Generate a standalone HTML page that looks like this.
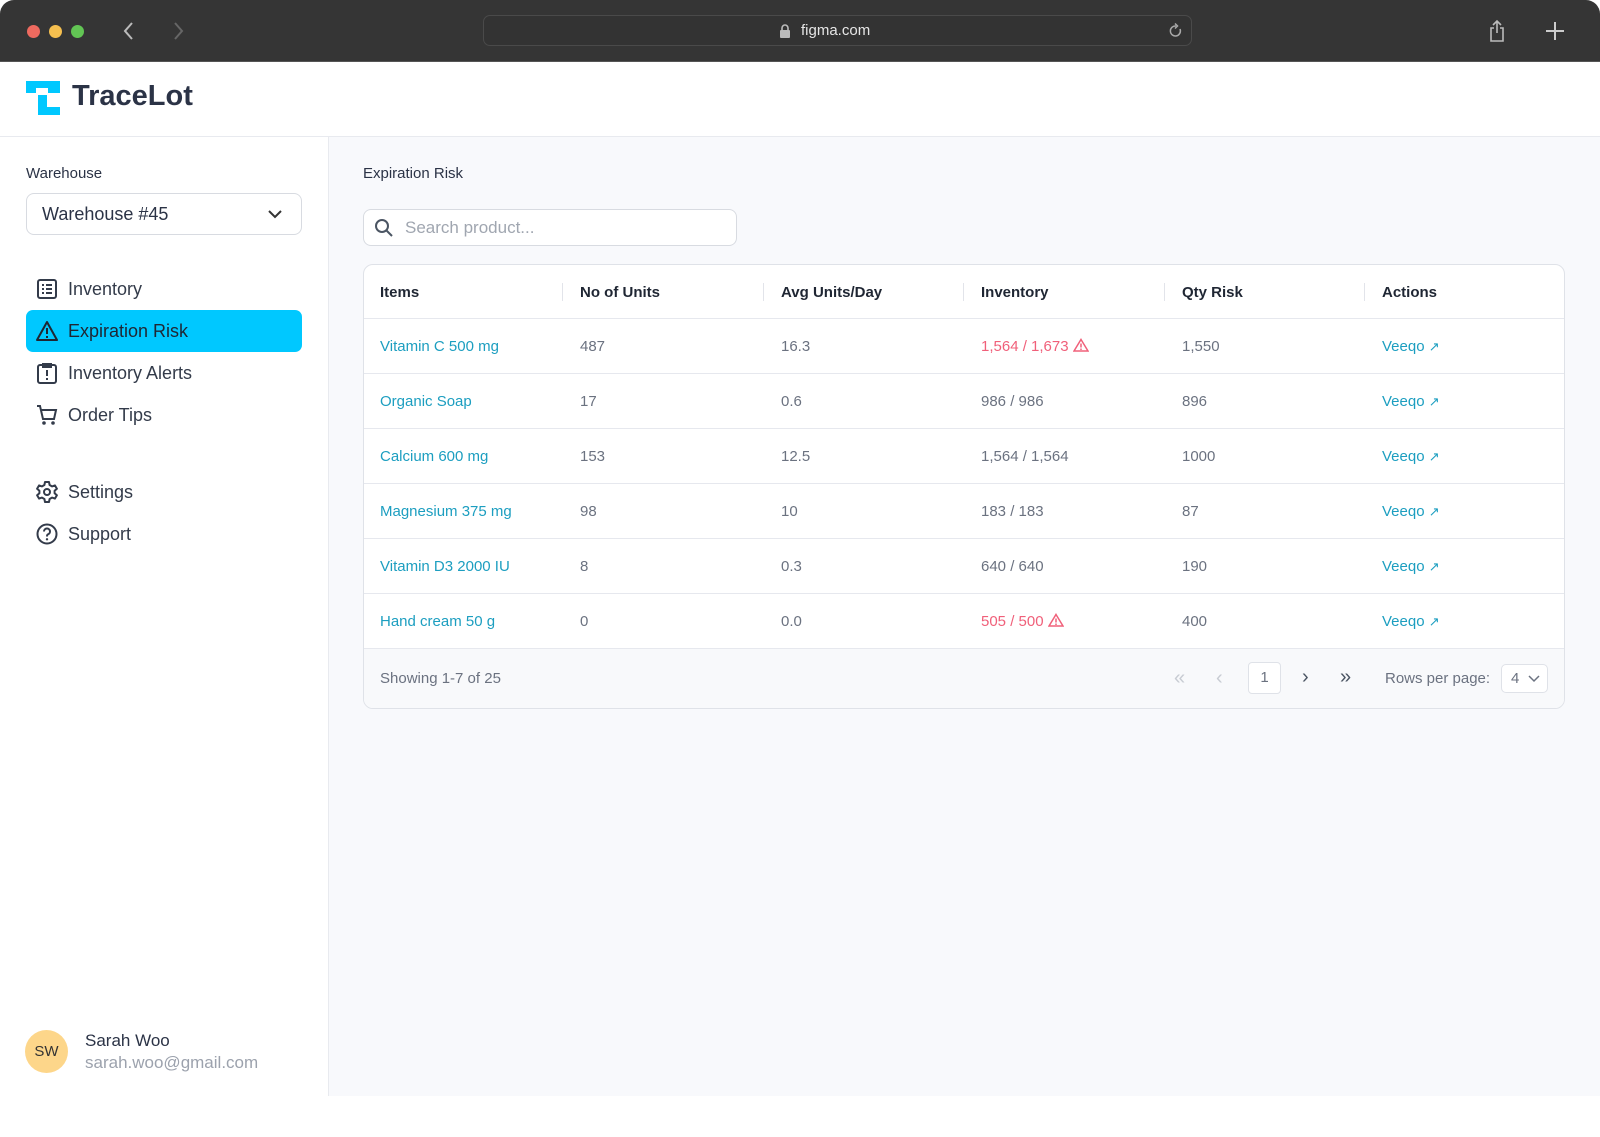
<!DOCTYPE html>
<html><head><meta charset="utf-8"><style>
*{box-sizing:border-box;margin:0;padding:0}
body{width:1600px;height:1137px;background:#fff;font-family:"Liberation Sans",sans-serif;position:relative;overflow:hidden}
.abs{position:absolute}
.top{left:0;top:0;width:1600px;height:62px;background:#353535;border-radius:14px 14px 0 0;border-bottom:1px solid #555}
.dot{width:13px;height:13px;border-radius:50%;top:25px}
.url{left:483px;top:15px;width:709px;height:31px;border:1px solid #4a4a4a;border-radius:7px;background:#333}
.hdr{left:0;top:62px;width:1600px;height:75px;background:#fff;border-bottom:1px solid #e8eaef}
.side{left:0;top:137px;width:329px;height:959px;background:#fff;border-right:1px solid #e8eaef}
.main{left:329px;top:137px;width:1271px;height:959px;background:#f8f9fc}
.nav{left:26px;width:276px;height:42px;border-radius:7px;font-size:18px;color:#333b4a}
.nav svg{position:absolute;left:10px;top:10px}
.nav span{position:absolute;left:42px;top:11px}
.tbl{left:363px;top:264px;width:1202px;height:445px;background:#fff;border:1.5px solid #dfe2e8;border-radius:10px;overflow:hidden}
.row{position:absolute;left:0;width:100%;height:55px;border-top:1.5px solid #e6e8ee;font-size:15px;color:#6b7280}
.row div{position:absolute;top:19px}
.th{font-size:15px;color:#1f2633;font-weight:bold}
.link{color:#1c9ec0}
.red{color:#f0607a}
.sep{position:absolute;top:18px;width:1px;height:18px;background:#e2e4ea}
</style></head><body>
<div class="abs top">
<div class="abs dot" style="left:27px;background:#ee6a5f"></div>
<div class="abs dot" style="left:49px;background:#f5bf4f"></div>
<div class="abs dot" style="left:71px;background:#62c554"></div>
<svg class="abs" style="left:122px;top:21px" width="14" height="20"><path d="M10 2 L3 10 L10 18" stroke="#bbb" stroke-width="2" fill="none"/></svg>
<svg class="abs" style="left:171px;top:21px" width="14" height="20"><path d="M4 2 L11 10 L4 18" stroke="#666" stroke-width="2" fill="none"/></svg>
<div class="abs url">
<svg class="abs" style="left:295px;top:8px" width="12" height="15"><rect x="1" y="6" width="10" height="8" rx="1" fill="#bbb"/><path d="M3 6 V4 a3 3 0 0 1 6 0 V6" stroke="#bbb" stroke-width="1.6" fill="none"/></svg>
<div class="abs" style="left:317px;top:6px;color:#e6e6e6;font-size:15px">figma.com</div>
<svg class="abs" style="left:684px;top:7px" width="16" height="16"><path d="M12 6 A5 5 0 1 1 8 3" stroke="#aaa" stroke-width="1.5" fill="none"/><path d="M7 0.5 L9.5 3 L7 5.5" stroke="#aaa" stroke-width="1.5" fill="none"/></svg>
</div>
<svg class="abs" style="left:1488px;top:19px" width="18" height="24"><path d="M6 9 H3 V22 H15 V9 H12 M9 14 V2 M5 6 L9 2 L13 6" stroke="#bbb" stroke-width="1.6" fill="none"/></svg>
<svg class="abs" style="left:1545px;top:21px" width="20" height="20"><path d="M10 1 V19 M1 10 H19" stroke="#ccc" stroke-width="2"/></svg>
</div>
<div class="abs hdr">
<svg class="abs" style="left:26px;top:19px" width="34" height="34"><path d="M0 0 H34 V12 H22 V7 H0 Z M0 7 H10 V12 H0Z" fill="#00c8ff"/><path d="M12 14 H21 V26 H34 V34 H12 Z" fill="#00c8ff"/></svg>
<div class="abs" style="left:72px;top:18px;font-size:29px;font-weight:bold;color:#2b3346">TraceLot</div>
</div>
<div class="abs side">
<div class="abs" style="left:26px;top:28px;font-size:15px;color:#2b3346">Warehouse</div>
<div class="abs" style="left:26px;top:56px;width:276px;height:42px;border:1.5px solid #d8dbe1;border-radius:8px;background:#fff">
<div class="abs" style="left:15px;top:10px;font-size:18px;color:#2b3346">Warehouse #45</div>
<svg class="abs" style="left:240px;top:14px" width="16" height="12"><path d="M2 3 L8 9 L14 3" stroke="#333" stroke-width="2" fill="none"/></svg>
</div>
<div class="abs nav" style="top:131px"><svg width="22" height="22"><rect x="2" y="2" width="18" height="18" rx="2" stroke="#333b4a" stroke-width="2" fill="none"/><path d="M6 7h2M6 11h2M6 15h2M10 7h6M10 11h6M10 15h6" stroke="#333b4a" stroke-width="2"/></svg><span>Inventory</span></div>
<div class="abs nav" style="top:173px;background:#00c8ff"><svg width="22" height="22"><path d="M11 2 L21 20 H1 Z" stroke="#1f2633" stroke-width="2" fill="none" stroke-linejoin="round"/><path d="M11 8 V14 M11 16 V18" stroke="#1f2633" stroke-width="2"/></svg><span style="color:#1f2633">Expiration Risk</span></div>
<div class="abs nav" style="top:215px"><svg width="22" height="22"><rect x="2" y="3" width="18" height="18" rx="2" stroke="#333b4a" stroke-width="2" fill="none"/><path d="M7 2 H15 V5 H7Z M11 8 V14 M11 16 V18" stroke="#333b4a" stroke-width="2" fill="none"/></svg><span>Inventory Alerts</span></div>
<div class="abs nav" style="top:257px"><svg width="22" height="22"><path d="M1 2 H4 L7 15 H18 L20 6 H5" stroke="#333b4a" stroke-width="2" fill="none"/><circle cx="8" cy="19" r="1.8" fill="#333b4a"/><circle cx="17" cy="19" r="1.8" fill="#333b4a"/></svg><span>Order Tips</span></div>
<div class="abs nav" style="top:334px"><svg width="22" height="22"><path d="M9 1h4l.6 3 2.4 1.4 2.9-1 2 3.4-2.3 2v2.4l2.3 2-2 3.4-2.9-1L13.6 18 13 21H9l-.6-3L6 16.6l-2.9 1-2-3.4 2.3-2V9.8l-2.3-2 2-3.4 2.9 1L8.4 4Z" stroke="#333b4a" stroke-width="2" fill="none" stroke-linejoin="round"/><circle cx="11" cy="11" r="3" stroke="#333b4a" stroke-width="2" fill="none"/></svg><span>Settings</span></div>
<div class="abs nav" style="top:376px"><svg width="22" height="22"><circle cx="11" cy="11" r="9.5" stroke="#333b4a" stroke-width="2" fill="none"/><path d="M8 8.5 a3 3 0 1 1 4 2.8 c-1 .4-1 1-1 2.2" stroke="#333b4a" stroke-width="2" fill="none"/><circle cx="11" cy="16.3" r="1.2" fill="#333b4a"/></svg><span>Support</span></div>
<div class="abs" style="left:25px;top:893px;width:43px;height:43px;border-radius:50%;background:#fdd68a;font-size:15px;color:#333;text-align:center;line-height:43px">SW</div>
<div class="abs" style="left:85px;top:894px;font-size:17px;color:#2b3346">Sarah Woo</div>
<div class="abs" style="left:85px;top:916px;font-size:17px;color:#9ca2ad">sarah.woo@gmail.com</div>
</div>
<div class="abs main">
<div class="abs" style="left:34px;top:28px;font-size:15px;color:#2b3346">Expiration Risk</div>
<div class="abs" style="left:34px;top:72px;width:374px;height:37px;background:#fff;border:1.5px solid #d8dbe1;border-radius:8px">
<svg class="abs" style="left:10px;top:8px" width="20" height="20"><circle cx="8" cy="8" r="6" stroke="#4b5563" stroke-width="2" fill="none"/><path d="M12.5 12.5 L18 18" stroke="#4b5563" stroke-width="2"/></svg>
<div class="abs" style="left:41px;top:8px;font-size:17px;color:#a0a6b0">Search product...</div>
</div>
</div>
<div class="abs tbl">
<div class="row" style="top:0;border-top:none">
<div class="th" style="left:16px">Items</div><span class="sep" style="left:198px"></span>
<div class="th" style="left:216px">No of Units</div><span class="sep" style="left:399px"></span>
<div class="th" style="left:417px">Avg Units/Day</div><span class="sep" style="left:599px"></span>
<div class="th" style="left:617px">Inventory</div><span class="sep" style="left:800px"></span>
<div class="th" style="left:818px">Qty Risk</div><span class="sep" style="left:1000px"></span>
<div class="th" style="left:1018px">Actions</div>
</div>
<div class="row" style="top:53px"><div class="link" style="left:16px">Vitamin C 500 mg</div><div style="left:216px">487</div><div style="left:417px">16.3</div><div class="red" style="left:617px">1,564 / 1,673 <svg width="16" height="14" style="vertical-align:-1px"><path d="M8 1.5 L15 13 H1 Z" stroke="#f0607a" stroke-width="1.5" fill="none"/><path d="M8 5.5V9.5M8 10.5V12" stroke="#f0607a" stroke-width="1.5"/></svg></div><div style="left:818px">1,550</div><div class="link" style="left:1018px">Veeqo <span style="font-size:13px">&#8599;</span></div></div>
<div class="row" style="top:108px"><div class="link" style="left:16px">Organic Soap</div><div style="left:216px">17</div><div style="left:417px">0.6</div><div style="left:617px">986 / 986</div><div style="left:818px">896</div><div class="link" style="left:1018px">Veeqo <span style="font-size:13px">&#8599;</span></div></div>
<div class="row" style="top:163px"><div class="link" style="left:16px">Calcium 600 mg</div><div style="left:216px">153</div><div style="left:417px">12.5</div><div style="left:617px">1,564 / 1,564</div><div style="left:818px">1000</div><div class="link" style="left:1018px">Veeqo <span style="font-size:13px">&#8599;</span></div></div>
<div class="row" style="top:218px"><div class="link" style="left:16px">Magnesium 375 mg</div><div style="left:216px">98</div><div style="left:417px">10</div><div style="left:617px">183 / 183</div><div style="left:818px">87</div><div class="link" style="left:1018px">Veeqo <span style="font-size:13px">&#8599;</span></div></div>
<div class="row" style="top:273px"><div class="link" style="left:16px">Vitamin D3 2000 IU</div><div style="left:216px">8</div><div style="left:417px">0.3</div><div style="left:617px">640 / 640</div><div style="left:818px">190</div><div class="link" style="left:1018px">Veeqo <span style="font-size:13px">&#8599;</span></div></div>
<div class="row" style="top:328px"><div class="link" style="left:16px">Hand cream 50 g</div><div style="left:216px">0</div><div style="left:417px">0.0</div><div class="red" style="left:617px">505 / 500 <svg width="16" height="14" style="vertical-align:-1px"><path d="M8 1.5 L15 13 H1 Z" stroke="#f0607a" stroke-width="1.5" fill="none"/><path d="M8 5.5V9.5M8 10.5V12" stroke="#f0607a" stroke-width="1.5"/></svg></div><div style="left:818px">400</div><div class="link" style="left:1018px">Veeqo <span style="font-size:13px">&#8599;</span></div></div>
<div class="row" style="top:383px;height:62px;background:#f8f9fb">
<div style="left:16px;top:21px">Showing 1-7 of 25</div>
<div style="left:810px;top:18px;color:#c8ccd3;font-size:20px">&laquo;</div>
<div style="left:852px;top:18px;color:#c8ccd3;font-size:20px">&lsaquo;</div>
<div style="left:884px;top:13px;width:33px;height:32px;border:1.5px solid #dfe2e8;border-radius:4px;background:#fff;text-align:center;line-height:29px">1</div>
<div style="left:938px;top:17px;color:#4b5563;font-size:20px">&rsaquo;</div>
<div style="left:976px;top:17px;color:#4b5563;font-size:20px">&raquo;</div>
<div style="left:1021px;top:21px">Rows per page:</div>
<div style="left:1137px;top:15px;width:47px;height:29px;border:1.5px solid #dfe2e8;border-radius:5px;background:#fff"><span style="position:absolute;left:9px;top:5px">4</span><svg style="position:absolute;left:26px;top:10px" width="12" height="8"><path d="M1 1 L6 6 L11 1" stroke="#6b7280" stroke-width="1.5" fill="none"/></svg></div>
</div>
</div>
</body></html>
